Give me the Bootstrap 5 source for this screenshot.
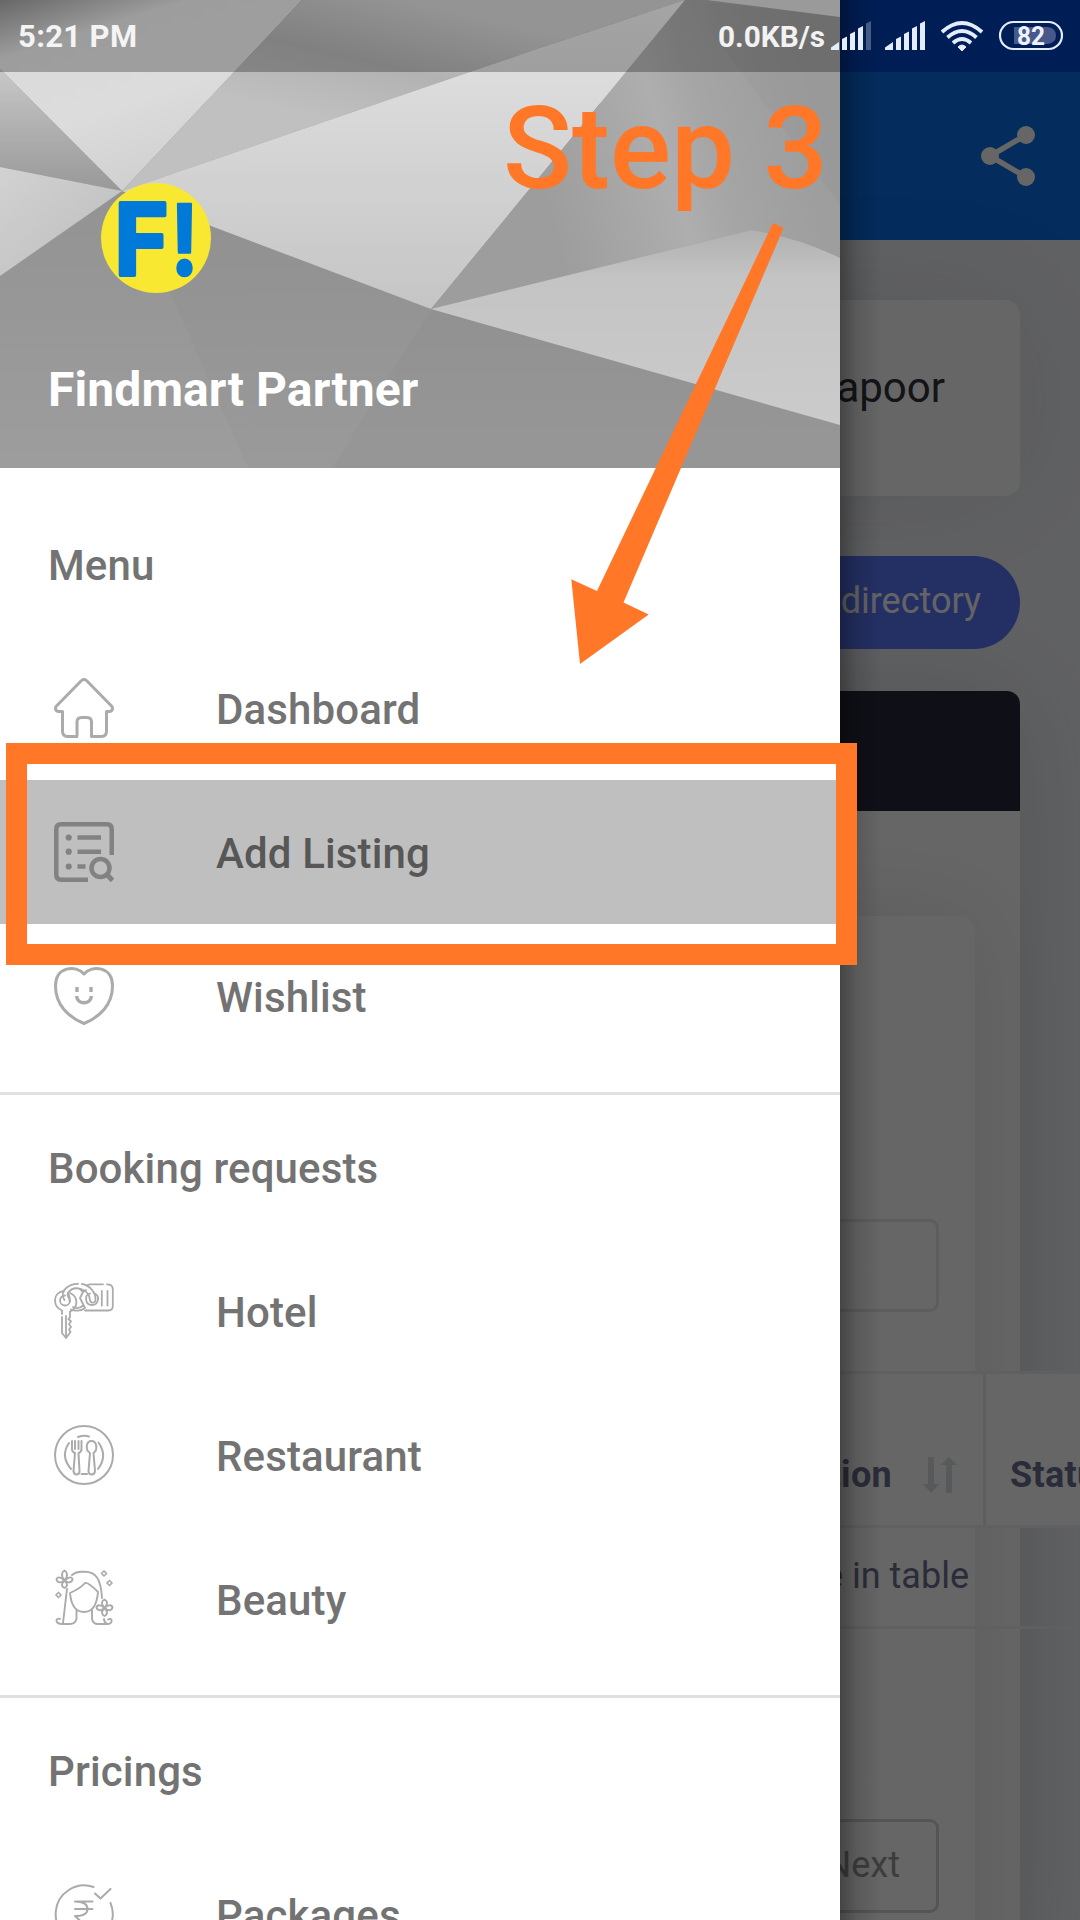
<!DOCTYPE html>
<html lang="en">
<head>
<meta charset="utf-8">
<meta name="viewport" content="width=device-width, initial-scale=1">
<title>Findmart Partner</title>
<link href="https://cdn.jsdelivr.net/npm/bootstrap@5.3.0/dist/css/bootstrap.min.css" rel="stylesheet">
<style>
  body { font-family: Roboto, "Noto Sans", sans-serif; width: 1080px; height: 1920px; overflow: hidden; background: #f1f3f6; }
  svg { display: block; }
  .screen { width: 1080px; height: 1920px; }
  .status-strip { height: 72px; background: #004bd7; }
  .app-bar { height: 168px; background: #0a6ee8; padding-right: 42px; }
  .page-body { padding: 60px 60px 0; }
  .name-card { height: 196px; border-radius: 15px; padding: 0 75px 22px 0; font-size: 42px; color: #2d3238; box-shadow: 0 0 120px rgba(60,60,90,.1); }
  .dir-btn { height: 93px; width: 420px; margin-top: 60px; border-radius: 47px; background: #5a78fa; color: #fafaff; font-size: 36px; padding: 0 39px 3px 0; }
  .panel { margin-top: 42px; height: 1300px; border-radius: 13px; background: #fff; box-shadow: 0 0 110px rgba(50,50,80,.15); }
  .panel-top { height: 120px; border-radius: 13px 13px 0 0; background: #26263a; }
  .inner-panel { margin: 105px 45px 0; height: 1100px; border-radius: 15px; background: #fff; box-shadow: 0 0 90px rgba(50,50,60,.12); padding: 303px 36px 0; }
  .search-box { height: 93px; width: 420px; border: 3px solid #e9e9e9; border-radius: 9px; }
  .grid-table { margin-top: 59px; width: 1300px; color: #69708f; font-size: 36px; }
  .grid-head { height: 157px; border: 3px solid #efeff1; background: #fff; font-weight: 700; }
  .head-cell { width: 842px; height: 151px; border-right: 3px solid #ececed; padding: 50px 26px 0 0; gap: 31px; letter-spacing: .3px; }
  .head-cell2 { padding: 50px 0 0 24px; letter-spacing: .3px; }
  .grid-row { height: 101px; border-bottom: 3px solid #efeff1; padding: 0 472px 2px 0; }
  .next-btn { height: 94px; width: 200px; margin-top: 190px; border: 3px solid #d4d4d4; border-radius: 9px; color: #999; font-size: 36px; padding: 0 36px 3px 0; }
  .scrim { background: rgba(0,0,0,.6); }
  .drawer { width: 840px; z-index: 3; }
  .drawer-shadow { left: 840px; width: 42px; z-index: 2; background: linear-gradient(90deg, rgba(0,0,0,.33), rgba(0,0,0,.12) 40%, transparent); }
  .hero { height: 468px; background: #989898; }
  .hero-name { left: 48px; top: 360px; font-size: 48px; font-weight: 700; line-height: 60px; letter-spacing: .1px; }
  .nav-title { height: 144px; padding: 3px 0 0 48px; }
  .nav-row { height: 144px; padding-left: 54px; gap: 102px; }
  .nav-row span { padding-top: 3px; }
  .nav-title, .nav-row { font-size: 42px; font-weight: 500; color: #737373; letter-spacing: .13px; }
  .nav-row svg { width: 60px; height: 60px; flex: none; fill: none; stroke: #ababab; stroke-linecap: round; stroke-linejoin: round; }
  .nav-row.picked { background: #bfbfbf; color: #575757; }
  .nav-row.picked svg { stroke: #828282; }
  .menu-list { padding-top: 24px; }
  .rule { margin-top: 24px; height: 3px; background: #e0e0e0; }
  .status-shade { width: 840px; height: 72px; background: rgba(0,0,0,.28); z-index: 4; }
  .clock { left: 18px; top: 19px; z-index: 5; font-size: 31px; font-weight: 700; line-height: 36px; letter-spacing: .35px; color: #f4f4f4; }
  .status-icons { z-index: 5; }
  .frame { left: 6px; top: 743px; width: 851px; height: 222px; border: 21px solid #ff7727; z-index: 6; }
  .notes { z-index: 7; }
</style>
<script src="https://cdn.jsdelivr.net/npm/bootstrap@5.3.0/dist/js/bootstrap.bundle.min.js"></script>
</head>
<body>
<div class="screen position-relative overflow-hidden">

  <main>
    <div class="status-strip"></div>
    <header class="app-bar d-flex align-items-center justify-content-end">
      <svg width="60" height="64" viewBox="978 124 60 64" fill="#fff" stroke="#fff"><path d="M1026 135L990 156L1026 177" fill="none" stroke-width="5.5"/><g stroke="none"><circle cx="1026" cy="135" r="9"/><circle cx="990" cy="156" r="9"/><circle cx="1026" cy="177" r="9"/></g></svg>
    </header>
    <section class="page-body">
      <div class="name-card bg-white d-flex align-items-center justify-content-end">Kapoor</div>
      <div class="d-flex justify-content-end"><div class="dir-btn d-flex align-items-center justify-content-end">Open directory</div></div>
      <div class="panel">
        <div class="panel-top"></div>
        <div class="inner-panel">
          <div class="d-flex justify-content-end"><div class="search-box"></div></div>
          <div class="grid-table">
            <div class="grid-head d-flex">
              <div class="head-cell d-flex align-items-center justify-content-end"><span>Location</span>
                <svg width="34" height="36" viewBox="0 0 34 36" fill="#dddfe3"><path d="M5 0H11V27H16.500L8 36L0 27H5ZM23 36H29V8H34L26 0L17.500 8H23Z"/></svg>
              </div>
              <div class="head-cell2 d-flex align-items-center">Status</div>
            </div>
            <div class="grid-row d-flex align-items-center justify-content-end">No data available in table</div>
          </div>
          <div class="d-flex justify-content-end"><div class="next-btn d-flex align-items-center justify-content-end">Next</div></div>
        </div>
      </div>
    </section>
  </main>

  <div class="scrim position-absolute top-0 start-0 w-100 h-100"></div>
  <div class="drawer-shadow position-absolute top-0 h-100"></div>

  <aside class="drawer position-absolute top-0 start-0 h-100 bg-white overflow-hidden">
    <div class="hero position-relative">
      <svg width="840" height="468" viewBox="0 0 840 468">
        <defs>
          <linearGradient id="a" x1="0" y1="0" x2=".5" y2="1"><stop offset="0" stop-color="#909090"/><stop offset=".25" stop-color="#dadada"/><stop offset=".6" stop-color="#dcdcdc"/><stop offset="1" stop-color="#cfcfcf"/></linearGradient>
          <linearGradient id="b" x1="0" y1="0" x2="0" y2="1"><stop offset="0" stop-color="#c8c8c8"/><stop offset=".55" stop-color="#adadad"/><stop offset="1" stop-color="#999"/></linearGradient>
          <linearGradient id="c" x1="0" y1="0" x2="1" y2="1"><stop offset="0" stop-color="#d2d2d2"/><stop offset="1" stop-color="#bcbcbc"/></linearGradient>
          <linearGradient id="d" gradientUnits="userSpaceOnUse" x1="400" y1="0" x2="370" y2="130"><stop offset="0" stop-color="#cdcdcd"/><stop offset=".5" stop-color="#b2b2b2"/><stop offset="1" stop-color="#c0c0c0"/></linearGradient>
          <linearGradient id="e" x1="0" y1="0" x2="0" y2="1"><stop offset="0" stop-color="#e4e4e4"/><stop offset=".35" stop-color="#d9d9d9"/><stop offset="1" stop-color="#c5c5c5"/></linearGradient>
          <linearGradient id="f" gradientUnits="userSpaceOnUse" x1="540" y1="180" x2="790" y2="110"><stop offset="0" stop-color="#9d9d9d"/><stop offset=".5" stop-color="#aeaeae"/><stop offset=".68" stop-color="#a5a5a5"/><stop offset="1" stop-color="#9e9e9e"/></linearGradient>
          <linearGradient id="g" x1="0" y1="0" x2="0" y2="1"><stop offset="0" stop-color="#b0b0b0"/><stop offset=".25" stop-color="#c4c4c4"/><stop offset="1" stop-color="#cbcbcb"/></linearGradient>
          <linearGradient id="h" x1="0" y1="0" x2="0" y2="1"><stop offset="0" stop-color="#8a8a8a"/><stop offset=".6" stop-color="#939393"/><stop offset="1" stop-color="#9a9a9a"/></linearGradient>
          <linearGradient id="i" gradientUnits="userSpaceOnUse" x1="690" y1="60" x2="800" y2="30"><stop offset="0" stop-color="#9a9a9a" stop-opacity="0"/><stop offset="1" stop-color="#999"/></linearGradient>
        </defs>
        <path fill="url(#h)" d="M0 0H840V468H0Z"/>
        <path fill="url(#a)" d="M0 0H302L122 191L0 69Z"/>
        <path fill="url(#b)" d="M0 69L122 191L0 167Z"/>
        <path fill="url(#c)" d="M0 167L122 191L0 276Z"/>
        <path fill="url(#d)" d="M302 0H685L540 48L122 191Z"/>
        <path fill="#e0e0e0" d="M685 0L500 62L540 48L560 100L610 104Z"/>
        <path fill="url(#e)" d="M685 0L540 48L122 191L211 226L431 309Z"/>
        <path fill="url(#f)" d="M685 0H840V258L751 230L431 309Z"/>
        <path fill="url(#i)" d="M687 0L840 17V205Z"/>
        <path fill="#d6d6d6" d="M707 0H840V17Z"/>
        <path fill="url(#g)" d="M431 309L751 230Q800 238 840 258V425Z"/>
        <path fill="#fff" opacity=".035" d="M160 270L248 468H0V276L122 191Z"/>
        <path fill="#000" opacity=".02" d="M431 309L840 425V468H332Z"/>
        <circle cx="156" cy="238" r="55" fill="#f8e831"/>
        <g font-family="Inter, Roboto, sans-serif" font-weight="700" font-size="99" fill="#0079d8" stroke="#0079d8" stroke-width="4" stroke-linejoin="round"><text x="114.500" y="274.500" textLength="54" lengthAdjust="spacingAndGlyphs">F</text><text x="170.500" y="274.500" font-size="98" stroke-width="2.500" textLength="28" lengthAdjust="spacingAndGlyphs">!</text></g>
      </svg>
      <div class="hero-name position-absolute text-white text-nowrap">Findmart Partner</div>
    </div>

    <nav class="menu-list">
      <div class="nav-title d-flex align-items-center">Menu</div>
      <div class="nav-row d-flex align-items-center">
        <svg viewBox="0 0 60 60" stroke-width="3" style="stroke-linecap:butt"><path d="M24 58.500H13.500Q8.500 58.500 8.500 53V33.500H4.500Q1.500 33 1.500 30.500Q1.500 29 2.500 28L27 3Q30 0 33 3L57.500 28Q58.500 29 58.500 30.500Q58.500 33 55.500 33.500H52.500V53Q52.500 58.500 47.500 58.500H37.500V44Q37.500 39.500 33 39.500H27.500Q23 39.500 23 44V58.500"/></svg>
        <span>Dashboard</span>
      </div>
      <div class="nav-row picked d-flex align-items-center">
        <svg viewBox="0 0 60 60" stroke-width="4.500" style="stroke-linecap:butt"><path d="M34 57.700H7Q2.300 57.700 2.300 53V7Q2.300 2.300 7 2.300H53Q57.700 2.300 57.700 7V33"/><path d="M23.500 15.500H47M23.500 29.700H47M23.500 44.500H31.500"/><circle cx="46.500" cy="46" r="9"/><path d="M52.500 52L58.500 58.500" stroke-width="5"/><g fill="#828282" stroke="none"><circle cx="14.700" cy="15.500" r="3.100"/><circle cx="14.700" cy="29.700" r="3.100"/><circle cx="14.700" cy="44.500" r="3.100"/></g></svg>
        <span>Add Listing</span>
      </div>
      <div class="nav-row d-flex align-items-center">
        <svg viewBox="0 0 60 60" stroke-width="3" style="stroke-linecap:butt"><path d="M30 8C22-1.500 1.500 .5 1.500 20C1.500 38.500 14 51 30 57.500C46 51 58.500 38.500 58.500 20C58.500 .5 38 -1.500 30 8Z"/><path d="M23 21V26M37 21V26M22.500 30C23.500 39 36.500 39 37.500 30" stroke-width="3.400"/></svg>
        <span>Wishlist</span>
      </div>
      <div class="rule"></div>
      <div class="nav-title d-flex align-items-center">Booking requests</div>
      <div class="nav-row d-flex align-items-center">
        <svg viewBox="0 0 60 60" stroke-width="1.800"><path d="M8 33V29.500C-2 25 -1 11 10 10M16 12C25 16 24 27 16 30.500V36L14.500 38L17 40.500L15 43L17 46L15 48.500L16.500 51L12 57L8 52V36M12 35V54"/><path d="M11 14.500A5 5 0 1 0 16 20C16 15 14 12 14 12"/><path d="M10.500 19C4 9 17 2.500 24 2.800M28 3C36 4 42 12 41.500 19C41 23 36 22 36 19C35 8 20 3 14 12C12 16 16 16 15.500 20"/><path d="M26 8L29 11L26 17L31 27C27 30.500 20 30 17 28.500M19 26C22 27.500 26 27.500 29 24.500M32 9L29 11"/><path d="M33 4.500Q34 3.300 36 3.300H49M53 3.300Q58.800 3.300 58.800 8V25Q58.800 29.500 54.500 29.500H31"/><path d="M40 12C47 15 44 24 38 24C31 24 30 14 36 12.500M47.800 10V24.500M53.500 10V24.500"/></svg>
        <span>Hotel</span>
      </div>
      <div class="nav-row d-flex align-items-center">
        <svg viewBox="0 0 60 60" stroke-width="2"><circle cx="30" cy="30" r="29"/><path d="M15 18Q6 31 17 44M44.500 17.500Q54 31 44 44M24 12Q30 10 35 11.500M27.500 49H33"/><path d="M18 16V24Q18 27 21 28L19.500 46Q20 49.500 22.500 49.500Q25.500 49.500 25.500 46L24.500 28Q27.500 27 27.500 24V16M21 16V24M24.500 16V24"/><path d="M36 28C31 25 32 16 37.500 16C43 16 44 25 39.500 28L41 46Q40.500 49.500 38 49.500Q34.500 49.500 34.500 46Z"/></svg>
        <span>Restaurant</span>
      </div>
      <div class="nav-row d-flex align-items-center">
        <svg viewBox="0 0 60 60" stroke-width="1.900"><path d="M18 6Q22 2.500 29 2.800C42 2 47 10 48 29M13 20L9 54M16 24Q27 19 31 14Q34 13 44 23C43 35 39 43 30 43C21 43 17 35 16 24ZM22.500 41V50Q21 55 16 55H8C1 55 1 48 6 50M38 41V50Q39 55 44 55H53C59 55 59 48 54 50.500M50 50Q50 53 53 55"/><path d="M10.500 11.500C6 6 8.500 2.500 10.500 1.500C12.500 2.500 15 6 10.500 11.500C16 7 18 8 18.500 10.500C18 13 15 15 10.500 11.500C15 16 12.500 18 10.500 19C8.500 18 6 16 10.500 11.500C6 15 3 13 2.500 10.500C3 8 6 7 10.500 11.500ZM50.500 39C46 33.500 48.500 31.500 50.500 30.500C52.500 31.500 55 33.500 50.500 39C55 35 58 36 58.500 38.500C58 41 55 43 50.500 39C55 43.500 52.500 46 50.500 47C48.500 46 46 43.500 50.500 39C46 43 43 41 42.500 38.500C43 36 46 35 50.500 39Z"/><path stroke-width="1.700" d="M50 2L52.500 4.500L50 7L47.500 4.500ZM55.500 11.500L58 14L55.500 16.500L53 14ZM4.500 23.500L7 26L4.500 28.500L2 26Z" stroke-dasharray="2 1.500"/></svg>
        <span>Beauty</span>
      </div>
      <div class="rule"></div>
      <div class="nav-title d-flex align-items-center">Pricings</div>
      <div class="nav-row d-flex align-items-center">
        <svg viewBox="0 0 60 60" stroke-width="2"><path d="M39.500 3A28.500 28.500 0 1 0 56.500 19M41 9.500L46.500 14.500L56.500 5M21 17.500H38.500M21 25H38.500M21 17.500Q33.500 17.500 33.500 25Q33.500 32 21 32L34 44"/></svg>
        <span>Packages</span>
      </div>
    </nav>
  </aside>

  <div class="status-shade position-absolute top-0 start-0"></div>
  <div class="clock position-absolute text-nowrap">5:21 PM</div>
  <svg class="status-icons position-absolute top-0 start-0" width="1080" height="72" viewBox="0 0 1080 72">
    <text x="718" y="47" font-size="30" font-weight="700" fill="#f2f2f2" textLength="107" lengthAdjust="spacingAndGlyphs">0.0KB/s</text>
    <g fill="#e4ecff">
      <path d="M831 50V47.500L839 42V50Z"/><path d="M842 50V39L847 36.500V50Z"/><path d="M850 50V34L855 31.500V50Z"/><path d="M858 50V28.500L863 26V50Z"/><path opacity=".3" d="M866 50V23.500L871 21V50Z"/>
      <path d="M885 50V47.500L893 42V50Z"/><path d="M896 50V39L901 36.500V50Z"/><path d="M904 50V34L909 31.500V50Z"/><path d="M912 50V28.500L917 26V50Z"/><path d="M920 50V23.500L925 21V50Z"/>
      <path d="M962 51L958 47Q962 43 966 47Z" stroke="#e4ecff" stroke-linejoin="round"/>
    </g>
    <g fill="none" stroke="#e4ecff" stroke-width="3.800"><path d="M942 32Q962 14 982 32M947.500 37.500Q962 24.500 976.500 37.500M953 43Q962 35 971 43"/></g>
    <rect x="1000" y="22" width="62" height="27" rx="13.500" fill="none" stroke="#e4ecff" stroke-width="2.200"/>
    <path d="M1014 27H1048Q1056 28 1056 35.500Q1056 43 1048 44H1014Z" fill="#47598a"/>
    <text x="1017" y="44.500" font-size="26" font-weight="700" fill="#eef2ff" textLength="28" lengthAdjust="spacingAndGlyphs">82</text>
  </svg>

  <div class="frame position-absolute"></div>
  <svg class="notes position-absolute top-0 start-0" width="1080" height="700" viewBox="0 0 1080 700" fill="#ff7727">
    <text x="503" y="187.500" font-size="115" font-weight="500" textLength="325" lengthAdjust="spacingAndGlyphs">Step 3</text>
    <path d="M773 223L783.500 228L623.500 602.500L648.700 614.500L580 664L571.300 579.300L597 591Z"/>
  </svg>
</div>
</body>
</html>
